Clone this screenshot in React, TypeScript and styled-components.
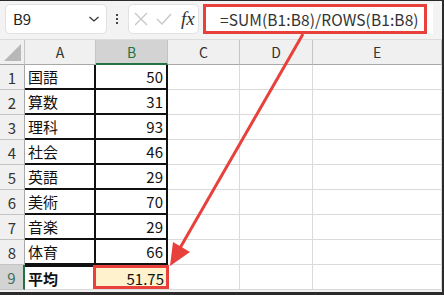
import styled, { createGlobalStyle } from "styled-components";

const GlobalStyle = createGlobalStyle`
  html, body { margin: 0; padding: 0; background: #fff; }
  body { font-family: "Noto Sans CJK JP", "Noto Sans", sans-serif; }
`;

const GREEN = "#217346";
const RED = "#e8413c";

const Frame = styled.div`
  position: relative;
  width: 444px;
  height: 295px;
  box-sizing: border-box;
  border-top: 1px solid #2b2b2b;
  border-right: 2px solid #2b2b2b;
  border-bottom: 3px solid #2b2b2b;
  background: #f0f0f0;
  overflow: hidden;
`;

const Toolbar = styled.div`
  display: flex;
  align-items: center;
  height: 39px;
  box-sizing: border-box;
  padding: 3px 0 6px 5px;
  background: #f3f3f3;
  border-bottom: 1px solid #dcdcdc;
`;

const Pill = styled.div<{ $w: number }>`
  display: flex;
  align-items: center;
  width: ${(p) => p.$w}px;
  height: 30px;
  box-sizing: border-box;
  background: #fff;
  border: 1px solid #e2e2e2;
  border-radius: 5px;
`;

const NameText = styled.span`
  flex: 1;
  padding-left: 7px;
  font-size: 15px;
  color: #222;
`;

const Dots = styled.div`
  display: flex;
  flex-direction: column;
  gap: 2px;
  margin: 0 10px 0 9px;
  span {
    width: 2px;
    height: 2px;
    background: #444;
  }
`;

const Fx = styled.span`
  font-family: "Liberation Serif", serif;
  font-style: italic;
  font-size: 19px;
  color: #333;
  margin-left: 9px;
`;

const FormulaBar = styled.div`
  flex: 1;
  height: 30px;
  margin-left: 4px;
  margin-right: 9px;
  background: #fff;
  display: flex;
`;

const FormulaBox = styled.div`
  width: 224px;
  height: 30px;
  box-sizing: border-box;
  border: 3px solid ${RED};
  padding-left: 14px;
  display: flex;
  align-items: center;
  font-size: 15.5px;
  letter-spacing: 0.1px;
  color: #333;
  white-space: nowrap;
`;

const Sheet = styled.div`
  display: grid;
  grid-template-columns: 25px 71px 72px 72px 73px 1fr;
  grid-template-rows: repeat(10, 25px);
  background: #fff;
`;

const Head = styled.div<{ $sel?: boolean }>`
  display: flex;
  align-items: center;
  justify-content: center;
  box-sizing: border-box;
  background: ${(p) => (p.$sel ? "#d3d3d3" : "#f0f0f0")};
  color: ${(p) => (p.$sel ? GREEN : "#333")};
  border-right: 1px solid #c4c4c4;
  border-bottom: ${(p) => (p.$sel ? `2px solid ${GREEN}` : "1px solid #a8a8a8")};
  font-size: 14px;
`;

const RowHead = styled.div<{ $sel?: boolean }>`
  display: flex;
  align-items: center;
  justify-content: center;
  box-sizing: border-box;
  background: ${(p) => (p.$sel ? "#d3d3d3" : "#f0f0f0")};
  color: ${(p) => (p.$sel ? "#3c6e5a" : "#333")};
  border-right: ${(p) => (p.$sel ? `2px solid ${GREEN}` : "1px solid #a8a8a8")};
  border-bottom: 1px solid #c4c4c4;
  font-size: 15px;
`;

const Corner = styled(Head)`
  position: relative;
  &::after {
    content: "";
    position: absolute;
    right: 3px;
    bottom: 3px;
    border-left: 17px solid transparent;
    border-bottom: 17px solid #b8b8b8;
  }
`;

const Cell = styled.div<{ $num?: boolean; $box?: boolean; $bold?: boolean; $top?: boolean }>`
  display: flex;
  align-items: center;
  justify-content: ${(p) => (p.$num ? "flex-end" : "flex-start")};
  box-sizing: border-box;
  padding: 0 3px;
  font-size: 15px;
  font-weight: ${(p) => (p.$bold ? 700 : 400)};
  color: #111;
  border-right: ${(p) => (p.$box ? "2px solid #111" : "1px solid #dadada")};
  border-bottom: ${(p) => (p.$box ? "2px solid #111" : "1px solid #dadada")};
  border-top: ${(p) => (p.$top ? "2px solid #111" : "0")};
`;

const Result = styled(Cell)`
  position: relative;
  background: #fff2cc;
  border-top: 2px solid ${GREEN};
  &::after {
    content: "";
    position: absolute;
    left: -3px;
    right: -2px;
    top: -2px;
    bottom: 0;
    border: 3px solid ${RED};
  }
`;

const Arrow = styled.svg`
  position: absolute;
  left: 0;
  top: 0;
  pointer-events: none;
`;

const subjects: [string, number][] = [
  ["国語", 50],
  ["算数", 31],
  ["理科", 93],
  ["社会", 46],
  ["英語", 29],
  ["美術", 70],
  ["音楽", 29],
  ["体育", 66],
];

export default function App() {
  return (
    <Frame>
      <GlobalStyle />
      <Toolbar>
        <Pill $w={102}>
          <NameText>B9</NameText>
          <svg width="12" height="8" viewBox="0 0 12 8" style={{ marginRight: 6 }}>
            <polyline points="1.5,2 6,6 10.5,2" fill="none" stroke="#333" strokeWidth="1.3" />
          </svg>
        </Pill>
        <Dots>
          <span />
          <span />
          <span />
        </Dots>
        <Pill $w={71}>
          <svg width="14" height="14" viewBox="0 0 14 14" style={{ marginLeft: 5 }}>
            <path d="M1 1 L13 13 M13 1 L1 13" stroke="#c6c6c6" strokeWidth="1.3" />
          </svg>
          <svg width="16" height="12" viewBox="0 0 16 12" style={{ marginLeft: 8 }}>
            <polyline points="1,6 6,11 15,1" fill="none" stroke="#c6c6c6" strokeWidth="1.3" />
          </svg>
          <Fx>fx</Fx>
        </Pill>
        <FormulaBar>
          <FormulaBox>=SUM(B1:B8)/ROWS(B1:B8)</FormulaBox>
        </FormulaBar>
      </Toolbar>
      <Sheet>
        <Corner />
        <Head>A</Head>
        <Head $sel>B</Head>
        <Head>C</Head>
        <Head>D</Head>
        <Head>E</Head>
        {subjects.map(([name, score], i) => (
          <Row key={name} n={i + 1} name={name} score={score} />
        ))}
        <RowHead $sel>9</RowHead>
        <Cell $bold $top>平均</Cell>
        <Result $num>51.75</Result>
        <Cell />
        <Cell />
        <Cell />
      </Sheet>
      <Arrow width="444" height="295" viewBox="0 0 444 295">
        <line x1="303" y1="33" x2="180" y2="247" stroke={RED} strokeWidth="3" />
        <polygon points="170,265 173,241 190,251" fill={RED} />
      </Arrow>
    </Frame>
  );
}

function Row({ n, name, score }: { n: number; name: string; score: number }) {
  return (
    <>
      <RowHead>{n}</RowHead>
      <Cell $box>{name}</Cell>
      <Cell $box $num>{score}</Cell>
      <Cell />
      <Cell />
      <Cell />
    </>
  );
}
